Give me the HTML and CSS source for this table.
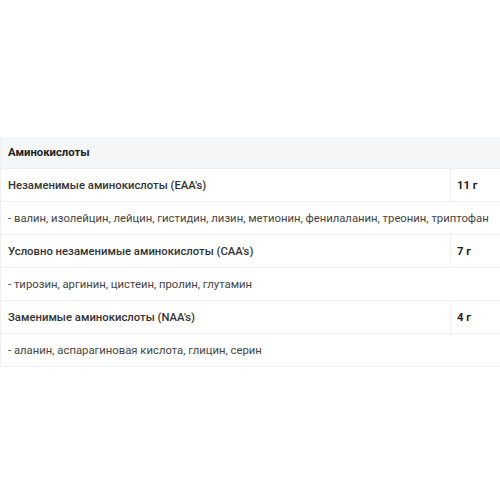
FILE: index.html
```html
<!DOCTYPE html>
<html lang="ru">
<head>
<meta charset="utf-8">
<link rel="stylesheet" href="styles.css">
</head>
<body>
<div class="page">
<table class="spec">
  <colgroup><col class="c-name"><col class="c-val"></colgroup>
  <tr class="head"><th colspan="2">Аминокислоты</th></tr>
  <tr class="group"><td class="name">Незаменимые аминокислоты (EAA's)</td><td class="val">11 г</td></tr>
  <tr class="sub"><td colspan="2">- валин, изолейцин, лейцин, гистидин, лизин, метионин, фенилаланин, треонин, триптофан</td></tr>
  <tr class="group"><td class="name">Условно незаменимые аминокислоты (CAA's)</td><td class="val">7 г</td></tr>
  <tr class="sub"><td colspan="2">- тирозин, аргинин, цистеин, пролин, глутамин</td></tr>
  <tr class="group"><td class="name">Заменимые аминокислоты (NAA's)</td><td class="val">4 г</td></tr>
  <tr class="sub"><td colspan="2">- аланин, аспарагиновая кислота, глицин, серин</td></tr>
</table>
</div>
</body>
</html>
```
FILE: styles.css
```css
html, body { margin: 0; padding: 0; background: #fff; }
.page { padding-top: 137px; }
.spec {
  width: 510px;
  table-layout: fixed;
  border-collapse: collapse;
  font-family: Roboto, "Noto Sans", sans-serif;
  font-size: 11.3px;
  color: #333;
  border-left: 1px solid #f0f0f0;
}
.c-name { width: 450px; }
.c-val { width: 60px; }
.spec th, .spec td {
  height: 32px;
  padding: 0 7px;
  text-align: left;
  border-bottom: 1px solid #efefef;
  white-space: nowrap;
  overflow: visible;
}
.head th {
  background: #f5f6f7;
  font-weight: 700;
  color: #1e1e1e;
  height: 31px;
}
.group .name { font-weight: 500; color: #333; }
.group .val { border-left: 1px solid #efefef; font-weight: 700; color: #222; padding-left: 6px; }
.sub td { font-weight: 400; color: #444; }
```
